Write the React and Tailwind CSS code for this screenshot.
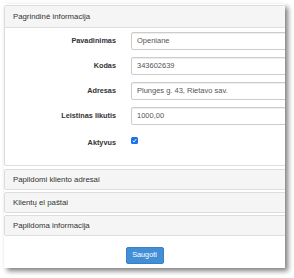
import React from 'react';

const font = { fontFamily: '"Liberation Sans", Arial, sans-serif' };

const fields = [
  { label: 'Pavadinimas', value: 'Openiane' },
  { label: 'Kodas', value: '343602639' },
  { label: 'Adresas', value: 'Plunges g. 43, Rietavo sav.' },
  { label: 'Leistinas likutis', value: '1000,00' },
];

const collapsed = ['Papildomi kliento adresai', 'Klientų el paštai', 'Papildoma informacija'];

export default function App() {
  return (
    <div className="w-[294px] h-[278px] bg-white pt-[4px] pl-[4px]" style={font}>
      <div className="w-[281px] h-[264px] bg-white overflow-hidden shadow-[3px_3px_5px_rgba(0,0,0,0.5)] pt-px">
        {/* Main panel */}
        <div className="w-[300px] border border-[#ddd] rounded-[2px] bg-white">
          <div className="h-[22px] bg-[#f5f5f5] border-b border-[#ddd] flex items-center pl-[8px] text-[7.8px] text-[#333]">
            Pagrindinė informacija
          </div>
          <div className="pt-[4px] pb-[15px] flex flex-col gap-[7px]">
            {fields.map((f) => (
              <div key={f.label} className="flex items-center h-[18px]">
                <div className="w-[111px] text-right font-bold text-[7.3px] text-[#333]">{f.label}</div>
                <div className="ml-[15px] flex-1 h-[18px] border border-[#ccc] rounded-[2px] shadow-[inset_0_1px_1px_rgba(0,0,0,0.075)] flex items-center pl-[5px] text-[7.5px] text-[#555]">
                  {f.value}
                </div>
              </div>
            ))}
            <div className="flex items-start h-[18px]">
              <div className="w-[111px] text-right font-bold text-[7.3px] text-[#333] pt-[6px]">Aktyvus</div>
              <div className="ml-[15px] mt-[5px] w-[7px] h-[7px] rounded-[1.5px] bg-[#1a73e8] flex items-center justify-center">
                <svg width="5" height="5" viewBox="0 0 10 10">
                  <path d="M1.5 5.5 L4 8 L8.5 2" fill="none" stroke="white" strokeWidth="1.8" />
                </svg>
              </div>
            </div>
          </div>
        </div>

        {/* Collapsed panels */}
        <div className="mt-[3px] flex flex-col gap-[2px]">
          {collapsed.map((t) => (
            <div key={t} className="w-[300px] h-[21px] border border-[#ddd] rounded-[2px] bg-[#f5f5f5] flex items-center pl-[8px] text-[7.8px] text-[#333]">
              {t}
            </div>
          ))}
        </div>

        <div className="flex justify-center mt-[11px]">
          <button className="w-[38px] h-[17px] rounded-[2px] bg-[#428fd6] border border-[#3a80c4] text-white text-[7.3px] flex items-center justify-center">
            Saugoti
          </button>
        </div>
      </div>
    </div>
  );
}
